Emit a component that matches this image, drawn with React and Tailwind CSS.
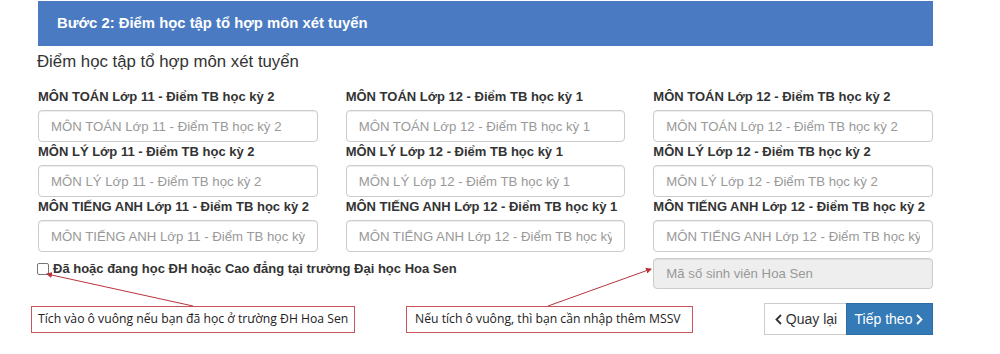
import { useState } from 'react';

const subjects = [
  ['MÔN TOÁN Lớp 11 - Điểm TB học kỳ 2', 'MÔN TOÁN Lớp 12 - Điểm TB học kỳ 1', 'MÔN TOÁN Lớp 12 - Điểm TB học kỳ 2'],
  ['MÔN LÝ Lớp 11 - Điểm TB học kỳ 2', 'MÔN LÝ Lớp 12 - Điểm TB học kỳ 1', 'MÔN LÝ Lớp 12 - Điểm TB học kỳ 2'],
  ['MÔN TIẾNG ANH Lớp 11 - Điểm TB học kỳ 2', 'MÔN TIẾNG ANH Lớp 12 - Điểm TB học kỳ 1', 'MÔN TIẾNG ANH Lớp 12 - Điểm TB học kỳ 2'],
];

function ScoreField({ label }) {
  return (
    <div className="flex flex-col mb-[2px]">
      <label className="text-[13px] leading-[16px] font-bold text-[#333] mb-[5px] whitespace-nowrap">{label}</label>
      <input
        placeholder={label}
        className="h-[32px] w-full rounded-[4px] border border-[#ccc] px-[12px] text-[13.2px] text-[#555] placeholder:text-[#999] shadow-[inset_0_1px_1px_rgba(0,0,0,0.075)] outline-none"
      />
    </div>
  );
}

export default function App() {
  const [studied, setStudied] = useState(false);

  return (
    <div className="relative w-[1000px] h-[354px] overflow-hidden bg-white font-['Liberation_Sans',Arial,sans-serif]">
      <div className="ml-[38px] w-[895px]">
        <div className="mt-[1px] h-[45px] bg-[#4a7bc2] pl-[19px] flex items-center text-white font-bold text-[14.85px]">
          Bước 2: Điểm học tập tổ hợp môn xét tuyển
        </div>

        <h3 className="mt-[4px] mb-[15px] -ml-px text-[16.8px] leading-[24px] text-[#333]">
          Điểm học tập tổ hợp môn xét tuyển
        </h3>

        <div className="grid grid-cols-3 gap-x-[28px]">
          {subjects.flat().map((s) => (
            <ScoreField key={s} label={s} />
          ))}
        </div>

        <div className="mt-[4px] grid grid-cols-3 gap-x-[28px]">
          <label className="col-span-2 flex items-center gap-[4px] pt-[3px] h-[18px] -ml-px text-[13px] font-bold text-[#333]">
            <input
              type="checkbox"
              checked={studied}
              onChange={(e) => setStudied(e.target.checked)}
              className="appearance-none w-[12px] h-[12px] rounded-[2px] border border-[#767676] bg-white"
            />
            Đã hoặc đang học ĐH hoặc Cao đẳng tại trường Đại học Hoa Sen
          </label>
          <input
            disabled={!studied}
            placeholder="Mã số sinh viên Hoa Sen"
            className="h-[31px] w-full rounded-[4px] border border-[#ccc] bg-[#eee] px-[12px] text-[13.2px] placeholder:text-[#999] shadow-[inset_0_1px_1px_rgba(0,0,0,0.075)] outline-none"
          />
        </div>

        <div className="mt-[14px] flex justify-end">
          <button className="h-[32px] w-[82px] flex items-center justify-center gap-[3px] border border-[#ccc] border-r-0 bg-white text-[14px] text-[#333]">
            <svg width="9" height="11" viewBox="0 0 9 11"><path d="M7 1 L2.5 5.5 L7 10" fill="none" stroke="#333" strokeWidth="1.8" /></svg>
            Quay lại
          </button>
          <button className="h-[32px] w-[87px] flex items-center justify-center gap-[3px] bg-[#337ab7] border border-[#2e6da4] text-[14px] text-white">
            Tiếp theo
            <svg width="9" height="11" viewBox="0 0 9 11"><path d="M2 1 L6.5 5.5 L2 10" fill="none" stroke="#fff" strokeWidth="1.8" /></svg>
          </button>
        </div>
      </div>

      {/* screenshot callouts */}
      <div className="absolute left-[31px] top-[306px] w-[324px] h-[27px] border border-[#c9545b] bg-white flex items-center pl-[6px] text-[12.2px] text-[#222] font-['Open_Sans',sans-serif]">
        Tích vào ô vuông nếu bạn đã học ở trường ĐH Hoa Sen
      </div>
      <div className="absolute left-[406px] top-[306px] w-[287px] h-[27px] border border-[#c9545b] bg-white flex items-center pl-[8px] text-[12.2px] text-[#222] font-['Open_Sans',sans-serif]">
        Nếu tích ô vuông, thì bạn cần nhập thêm MSSV
      </div>
      <svg className="absolute left-0 top-0 pointer-events-none" width="1000" height="354">
        <defs>
          <marker id="ah" markerWidth="6" markerHeight="6" refX="5" refY="3" orient="auto">
            <path d="M0 0 L6 3 L0 6 Z" fill="#b8333d" />
          </marker>
        </defs>
        <line x1="193" y1="306" x2="47" y2="274" stroke="#b8333d" strokeWidth="1" markerEnd="url(#ah)" />
        <line x1="548" y1="306" x2="651" y2="269" stroke="#b8333d" strokeWidth="1" markerEnd="url(#ah)" />
      </svg>
    </div>
  );
}
